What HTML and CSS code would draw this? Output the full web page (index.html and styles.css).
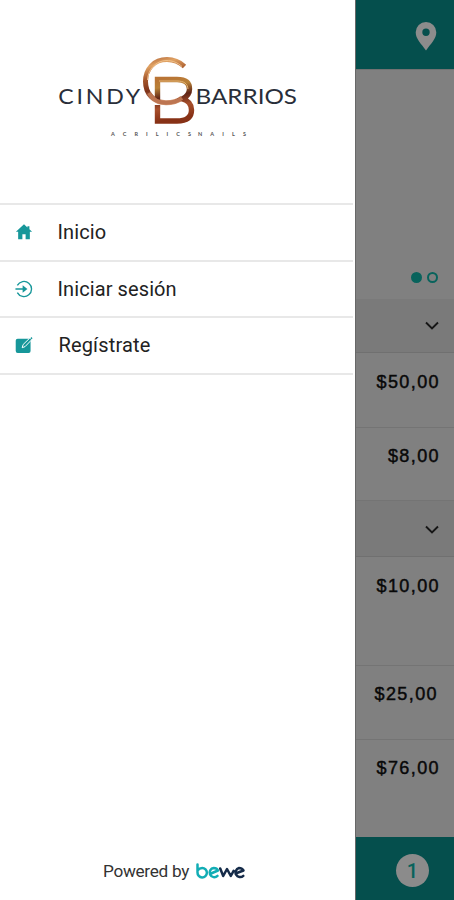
FILE: index.html
```html
<!DOCTYPE html>
<html lang="es">
<head>
<meta charset="utf-8">
<title>Cindy Barrios</title>
<link rel="stylesheet" href="styles.css">
</head>
<body>
<div class="app">
  <aside class="drawer">
    <svg class="logo" viewBox="0 0 355 203" aria-label="Cindy Barrios Acrilics Nails">
      <defs>
        <linearGradient id="c" x1="0" y1="0" x2="0.25" y2="1">
          <stop offset="0" stop-color="#b66c3d"/><stop offset=".17" stop-color="#e0a263"/><stop offset=".42" stop-color="#a85a2d"/><stop offset=".7" stop-color="#7d3219"/><stop offset="1" stop-color="#d79a76"/>
        </linearGradient>
        <linearGradient id="b" x1="0" y1="0" x2="0.15" y2="1">
          <stop offset="0" stop-color="#b97435"/><stop offset=".2" stop-color="#b98238"/><stop offset=".45" stop-color="#602516"/><stop offset=".7" stop-color="#a8502c"/><stop offset="1" stop-color="#873116"/>
        </linearGradient>
      </defs>
      <text class="word" x="53" y="104" textLength="74.500" transform="scale(1.1 1)">CINDY</text>
      <text class="word word-last" x="195.500" y="104" textLength="101.500" lengthAdjust="spacingAndGlyphs">BARRIOS</text>
      <path d="M184.500 66.500C179 61.500 174 59.600 167 59.600C154 59.600 145.500 69 145.500 81.500C145.500 94 154 102.800 166 102.800C173 102.800 178 101 182 98" fill="none" stroke="url(#c)" stroke-width="5"/>
      <path d="M157.500 101V79.500H177C187 79.500 189.500 84 189.500 89C189.500 94 186.500 97 182.500 99C188 100.500 191.500 104 191.500 110C191.500 117.500 186.500 121 177 121H157.500V105" fill="none" stroke="url(#b)" stroke-width="5.400"/>
      <path d="M159 81H177C184 81 187.500 83.500 188 89" fill="none" stroke="#e5b575" stroke-width="1"/>
      <path d="M149 93C153 100.500 159 102.800 166 102.800C173 102.800 178 101 182 98" fill="none" stroke="#bd7551" stroke-width="4"/>
      <path d="M147.500 80C148 69 156 61 166 60.500C173 60.500 178 63 182 66.500" fill="none" stroke="#f0c08a" stroke-width="1"/>
      <text class="tag" x="111" y="136" textLength="80">ACRILICS</text>
      <text class="tag" x="198" y="136" textLength="48">NAILS</text>
    </svg>
    <nav class="menu">
      <a class="item">
        <svg class="icon" viewBox="0 0 20 20"><path d="M10 1.500L1 9.800H3.500V18H8.200V12.500H11.800V18H16.500V9.800H19L16 7V3.500H13.800V5Z"/></svg>
        <span>Inicio</span>
      </a>
      <a class="item">
        <svg class="icon line" viewBox="0 0 20 20"><path d="M2.600 6A8.400 8.400 0 1 1 2.600 14M.5 10H12"/><path class="solid" d="M8.500 5.800L13.800 10L8.500 14.200Z"/></svg>
        <span>Iniciar sesión</span>
      </a>
      <a class="item register">
        <svg class="icon" viewBox="0 0 20 20"><rect x=".8" y="3" width="16.500" height="16" rx="2.200"/><path d="M8 13L9 9.500L16.500 2.200L18.500 4.200L11.200 11.800Z" stroke="#fff" stroke-width="1.100"/><path d="M17 2.500L18.300 1.200L19.500 2.400L18.200 3.700Z"/></svg>
        <span>Regístrate</span>
      </a>
    </nav>
    <footer class="powered">
      <span>Powered by</span>
      <svg class="bewe" viewBox="0 0 52 20" aria-label="bewe"><g fill="none" stroke-width="2.500" stroke-linecap="round" stroke-linejoin="round"><path stroke="#12adb5" d="M2.500 3.500V11.500A4.700 4.700 0 1 0 7.200 7Q4.500 7 2.500 9.500M16 12.500L23 9.500Q21.800 7 18.800 7A4.600 4.600 0 1 0 22.500 14.800"/><path stroke="#152b49" d="M25.200 7.500L28.200 15L32 8L35.800 15L38.600 9.800M40.500 12.500L48.500 9.500Q47 7 44 7A4.600 4.600 0 1 0 48.300 14.800"/></g></svg>
    </footer>
  </aside>
  <main class="page">
    <header class="bar">
      <svg class="pin" viewBox="0 0 22 30"><path fill-rule="evenodd" d="M11 1A10.300 10.300 0 0 0 .7 11.300C.7 18 6 22.500 11 29.500C16 22.500 21.300 18 21.300 11.300A10.300 10.300 0 0 0 11 1ZM11 7.500A3.700 3.700 0 1 1 11 14.900A3.700 3.700 0 0 1 11 7.500Z"/></svg>
    </header>
    <section class="hero"><i class="dot on"></i><i class="dot"></i></section>
    <div class="group first"><svg class="chev" viewBox="0 0 14 9"><path d="M1 1.500L7 7.500L13 1.500"/></svg></div>
    <div class="row r1">$50,00</div>
    <div class="row r2">$8,00</div>
    <div class="group"><svg class="chev" viewBox="0 0 14 9"><path d="M1 1.500L7 7.500L13 1.500"/></svg></div>
    <div class="row r3">$10,00</div>
    <div class="row r4">$25,00</div>
    <div class="row r5">$76,00</div>
    <footer class="bar cart"><span class="count">1</span></footer>
  </main>
</div>
</body>
</html>
```
FILE: styles.css
```css
* { box-sizing: border-box; }
body { margin: 0; font-family: Roboto, "Liberation Sans", sans-serif; }
.app { display: flex; width: 454px; height: 900px; overflow: hidden; background: #fff; }
.drawer { display: flex; flex-direction: column; width: 355px; flex: none; background: #fff; }
.logo { display: block; width: 355px; height: 203px; flex: none; }
.word { font: 400 21px Lato, sans-serif; fill: #292e39; }
.word-last { font-size: 21.500px; }
.tag { font: 700 5.500px Lato, sans-serif; fill: #555; }
.menu { border-top: 2px solid #e8e8e8; width: 353px; }
.item { display: flex; align-items: center; height: 56.500px; padding-left: 15px; border-bottom: 2px solid #e8e8e8; color: #222; font-size: 20px; }
.item span { margin-left: 24.500px; letter-spacing: .1px; }
.item.register span { margin-left: 25.500px; letter-spacing: .15px; }
.icon { width: 18px; height: 18px; fill: #17979a; flex: none; }
.line { fill: none; stroke: #17979a; stroke-width: 1.500; }
.solid { fill: #17979a; stroke: none; }
.powered { display: flex; align-items: center; height: 58px; margin-top: auto; padding-left: 103px; color: #333; font-size: 17.200px; letter-spacing: -.3px; }
.bewe { width: 52px; height: 20px; margin-left: 5.500px; }
.page { display: flex; flex-direction: column; width: 99px; background: #808080; border-left: 1px solid #686868; }
.bar { display: flex; justify-content: flex-end; align-items: center; height: 69px; flex: none; background: #054f4d; padding: 3px 17px 0 0; }
.pin { width: 22px; height: 30px; fill: #8c8c8c; }
.hero { display: flex; justify-content: flex-end; gap: 5px; height: 230px; padding: 202px 16px 0 0; border-top: 1px solid #727272; }
.dot { width: 11px; height: 11px; border: 2px solid #08635c; border-radius: 50%; }
.on { background: #08635c; }
.group { display: flex; justify-content: flex-end; align-items: center; height: 56px; padding: 2px 15px 0 0; background: #7a7a7a; border-bottom: 1px solid #707070; }
.first { height: 54px; padding-top: 0; }
.chev { width: 14px; height: 9px; fill: none; stroke: #161616; stroke-width: 1.900; }
.row { padding: 18px 14px 0 0; text-align: right; font: 400 18px/22px "Liberation Sans", sans-serif; letter-spacing: 1.400px; color: #080808; -webkit-text-stroke: .45px #080808; border-bottom: 1px solid #747474; }
.r1 { height: 75px; }
.r2 { height: 73px; padding-top: 17px; }
.r3 { height: 109px; }
.r4 { height: 74px; padding: 17px 16px 0 0; }
.r5 { height: 97px; padding-top: 17px; border: 0; }
.cart { height: 63px; padding: 4px 25px 0 0; }
.count { display: flex; align-items: center; justify-content: center; width: 33px; height: 33px; border-radius: 50%; background: #8b8b8b; color: #08635c; font-size: 20px; font-weight: 500; }
```
